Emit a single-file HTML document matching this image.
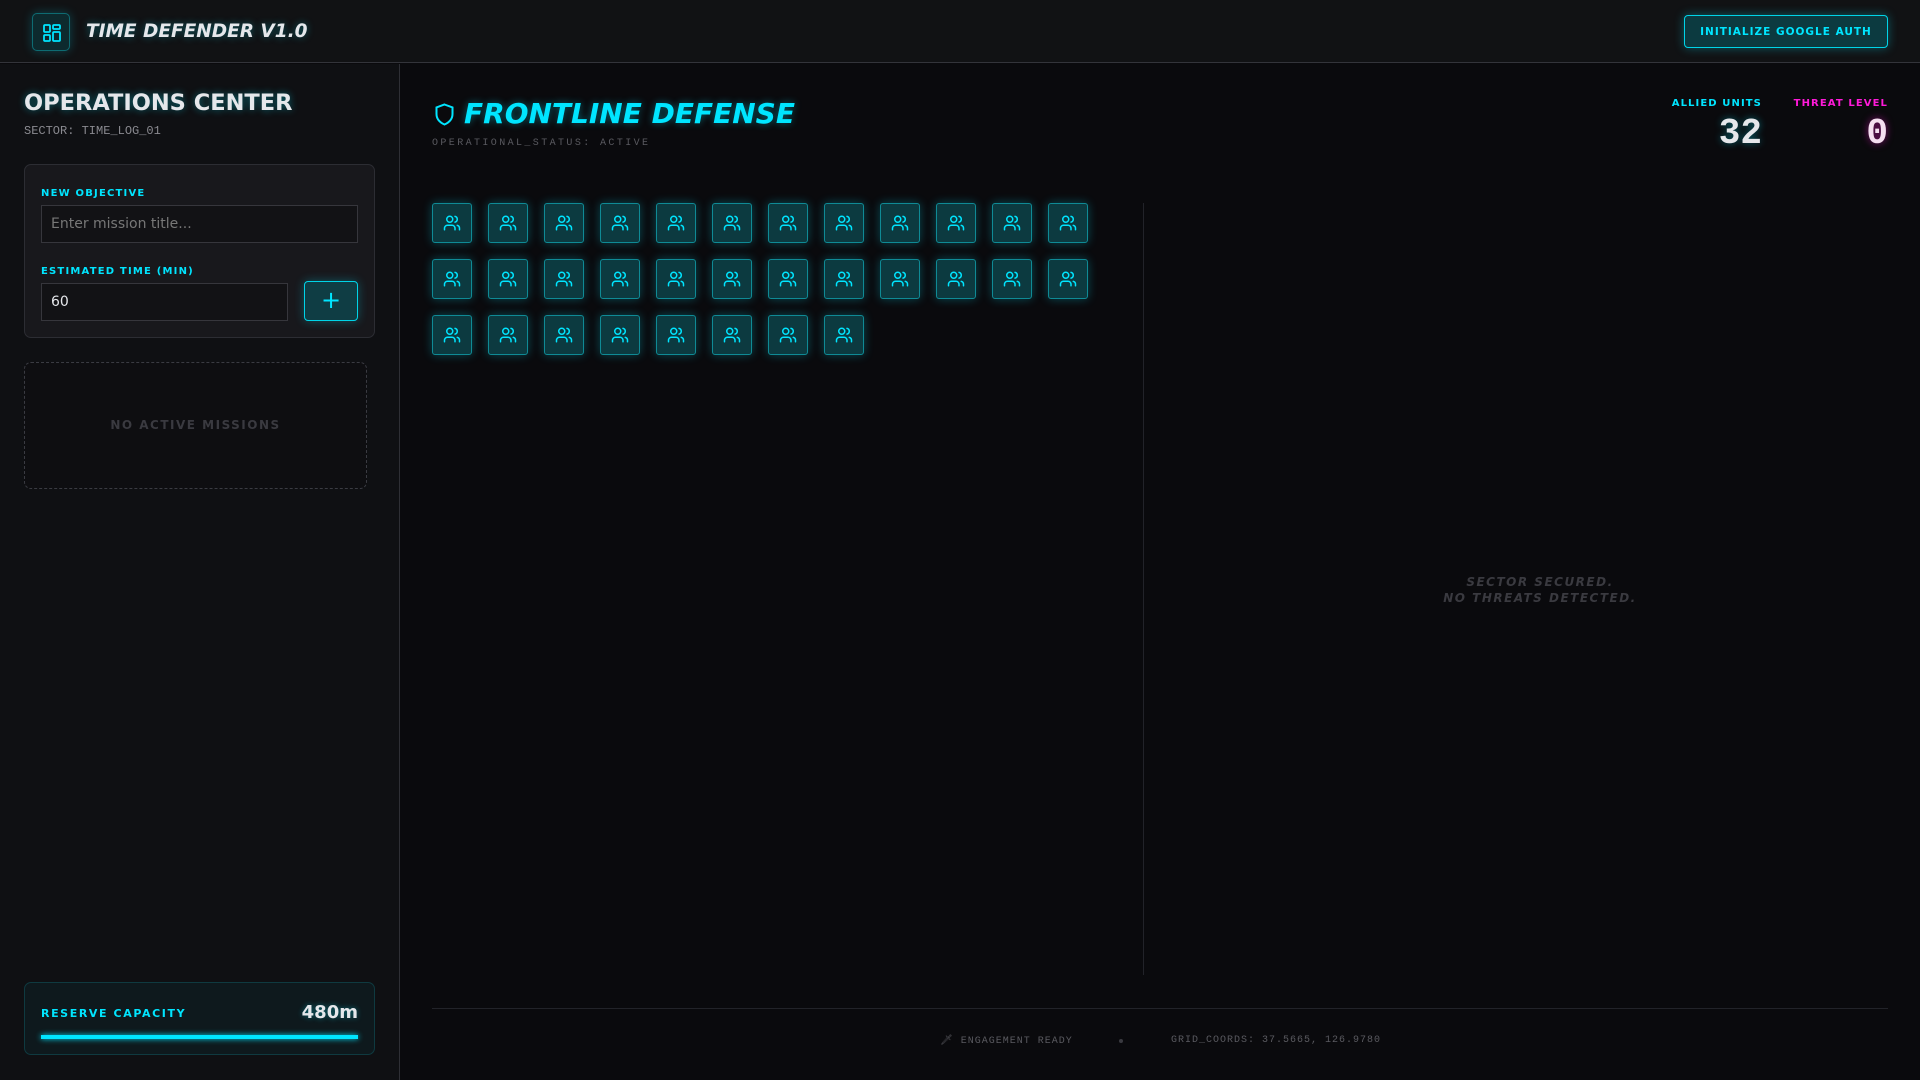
<!DOCTYPE html>
<html><head><meta charset="utf-8"><style>
*{box-sizing:border-box;margin:0;padding:0}
body{width:1920px;height:1080px;overflow:hidden;background:#0a0a0d;font-family:"DejaVu Sans","Liberation Sans",sans-serif;color:#e5e7eb;position:relative}
.a{position:absolute}
.mono{font-family:"Liberation Mono","DejaVu Sans Mono",monospace}
header{position:absolute;left:0;top:0;width:1920px;height:63px;background:#111214;border-bottom:1px solid #33343a}
.logo{left:32px;top:13px;width:38px;height:38px;border:1px solid #0e6b72;border-radius:5px;background:#0d2a2e;box-shadow:0 0 10px rgba(0,229,255,.25)}
.side{left:0;top:64px;width:400px;height:1016px;background:#0f1013;border-right:1px solid #2e2f35}
.lbl{font-size:10px;font-weight:bold;letter-spacing:1.2px;color:#00e5ff}
.inp{background:#121215;border:1px solid #36363c;color:#e5e7eb;font-size:14px;padding-left:9px;line-height:36px}
.tile{width:40px;height:40px;border:1px solid #0f8a95;border-radius:3px;background:#0c3a40;box-shadow:0 0 10px rgba(0,229,255,.3);display:flex;align-items:center;justify-content:center}
</style></head><body>
<header>
<div class="a logo"><svg class="a" style="left:10px;top:10px" width="18" height="18" viewBox="0 0 18 18" fill="none" stroke="#00e5ff" stroke-width="1.8"><rect x="1" y="1" width="6" height="7" rx="1"/><rect x="10" y="1" width="7" height="4" rx="1"/><rect x="10" y="8" width="7" height="9" rx="1"/><rect x="1" y="11" width="6" height="6" rx="1"/></svg></div>
<div class="a" style="left:86px;top:21px;font-size:18.5px;font-weight:bold;font-style:italic;color:#e5e7eb;text-shadow:0 0 8px rgba(0,229,255,.35)">TIME DEFENDER V1.0</div>
<div class="a" style="left:1684px;top:15px;width:204px;height:33px;border:1px solid #00d4e8;border-radius:4px;background:#0c3a40;box-shadow:0 0 10px rgba(0,229,255,.35);color:#00e5ff;font-size:10.5px;font-weight:bold;letter-spacing:1px;text-align:center;line-height:32px">INITIALIZE GOOGLE AUTH</div>
</header>
<div class="a side">
<div class="a" style="left:24px;top:26px;font-size:22.5px;font-weight:bold;color:#e5e7eb;text-shadow:0 0 8px rgba(0,229,255,.4)">OPERATIONS CENTER</div>
<div class="a mono" style="left:24px;top:60px;font-size:12px;color:#8a8a90">SECTOR: TIME_LOG_01</div>
<div class="a" style="left:24px;top:100px;width:351px;height:174px;border:1px solid #2c2d33;border-radius:7px;background:#18181c"></div>
<div class="a lbl" style="left:41px;top:124px">NEW OBJECTIVE</div>
<div class="a inp" style="left:41px;top:141px;width:317px;height:38px;color:#777">Enter mission title...</div>
<div class="a lbl" style="left:41px;top:202px">ESTIMATED TIME (MIN)</div>
<div class="a inp" style="left:41px;top:219px;width:247px;height:38px">60</div>
<div class="a" style="left:304px;top:217px;width:54px;height:40px;border:1px solid #00d4e8;border-radius:4px;background:#0f3d44;box-shadow:0 0 10px rgba(0,229,255,.3);color:#00e5ff;font-size:24px;text-align:center;line-height:36px">+</div>
<div class="a" style="left:24px;top:298px;width:343px;height:127px;border:1px dashed #3a3b42;border-radius:7px;background:#0e0e11;text-align:center;line-height:125px;font-size:12px;font-weight:bold;letter-spacing:1.5px;color:#3a3a40">NO ACTIVE MISSIONS</div>
<div class="a" style="left:24px;top:918px;width:351px;height:73px;border:1px solid #0f3a40;border-radius:7px;background:#0e191d"></div>
<div class="a lbl" style="left:41px;top:943px;font-size:11px;letter-spacing:1.6px">RESERVE CAPACITY</div>
<div class="a" style="left:280px;top:938px;width:78px;text-align:right;font-size:18px;font-weight:bold;color:#e5e7eb;text-shadow:0 0 6px rgba(0,229,255,.4)">480m</div>
<div class="a" style="left:41px;top:971px;width:317px;height:4px;background:#00e5ff;box-shadow:0 0 6px #00e5ff"></div>
</div>
<svg class="a" style="left:435px;top:103px" width="19" height="23" viewBox="0 0 19 23" fill="none" stroke="#00e5ff" stroke-width="2"><path d="M9.5 1.5 L17.5 4.5 V11 C17.5 16 14 19.5 9.5 21.5 C5 19.5 1.5 16 1.5 11 V4.5 Z"/></svg>
<div class="a" style="left:464px;top:97px;font-size:28px;font-weight:bold;font-style:italic;color:#00e5ff;text-shadow:0 0 8px rgba(0,229,255,.4)">FRONTLINE DEFENSE</div>
<div class="a mono" style="left:432px;top:138px;font-size:10px;letter-spacing:2.4px;color:#5a5a60">OPERATIONAL_STATUS: ACTIVE</div>
<div class="a" style="left:1600px;top:98px;width:162px;text-align:right;font-size:10px;font-weight:bold;letter-spacing:1.1px;color:#00e5ff">ALLIED UNITS</div>
<div class="a mono" style="left:1600px;top:113px;width:162px;text-align:right;font-size:36px;font-weight:bold;color:#e5e7eb;text-shadow:0 0 8px rgba(0,229,255,.4)">32</div>
<div class="a" style="left:1700px;top:98px;width:188px;text-align:right;font-size:10px;font-weight:bold;letter-spacing:1.1px;color:#ff1ad9">THREAT LEVEL</div>
<div class="a mono" style="left:1700px;top:113px;width:188px;text-align:right;font-size:36px;font-weight:bold;color:#f4dff0;text-shadow:0 0 8px rgba(255,26,217,.5)">0</div>
<div class="a" style="left:1143px;top:203px;width:1px;height:772px;background:#222329"></div>
<div class="a" style="left:1340px;top:574px;width:400px;text-align:center;font-size:12px;font-weight:bold;font-style:italic;letter-spacing:1.5px;line-height:16px;color:#3a3a40">SECTOR SECURED.<br>NO THREATS DETECTED.</div>
<div id="tiles"></div>
<div class="a" style="left:432px;top:1008px;width:1456px;height:1px;background:#222329"></div>
<div class="a mono" style="left:940px;top:1035px;font-size:10px;letter-spacing:1px;color:#5a5a60">&#x1F5E1;&#xFE0E; ENGAGEMENT READY</div>
<div class="a" style="left:1119px;top:1039px;width:4px;height:4px;border-radius:2px;background:#3a3a40"></div>
<div class="a mono" style="left:1171px;top:1035px;font-size:10px;letter-spacing:1px;color:#5a5a60">GRID_COORDS: 37.5665, 126.9780</div>
<script>
var h='';var n=0;
for(var r=0;r<3;r++)for(var c=0;c<12;c++){if(n>=32)break;n++;
h+='<div class="a tile" style="left:'+(432+c*56)+'px;top:'+(203+r*56)+'px"><svg width="18" height="18" viewBox="0 0 24 24" fill="none" stroke="#00e5ff" stroke-width="2" stroke-linecap="round"><path d="M16 21v-2a4 4 0 0 0-4-4H6a4 4 0 0 0-4 4v2"/><circle cx="9" cy="7" r="4"/><path d="M22 21v-2a4 4 0 0 0-3-3.87"/><path d="M16 3.13a4 4 0 0 1 0 7.75"/></svg></div>';}
document.getElementById('tiles').innerHTML=h;
</script>
</body></html>
